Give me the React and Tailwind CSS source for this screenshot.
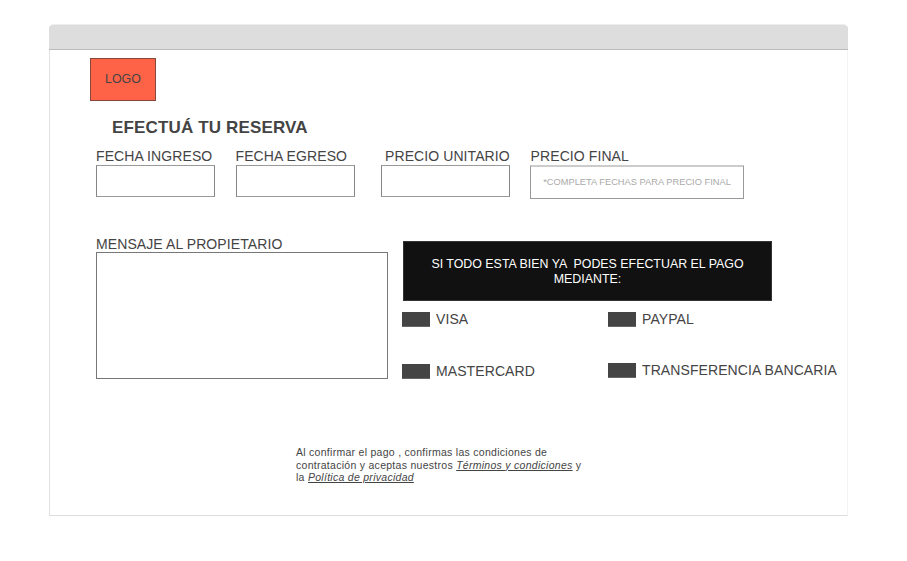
function Field({ label, className, labelClass = "", boxClass, children }) {
  return (
    <label className={`flex flex-col ${className}`}>
      <span className={`whitespace-nowrap text-[14px] leading-4 tracking-[0.09px] ${labelClass}`}>{label}</span>
      <span className={`mt-[1px] flex items-center justify-center border ${boxClass}`}>{children}</span>
    </label>
  );
}

function PaymentOption({ label, className = "" }) {
  return (
    <div className={`flex items-center gap-[6px] self-start ${className}`}>
      <span className="h-[15px] w-[28px] shrink-0 border-b border-[#666] bg-[#444]" />
      <span className="whitespace-nowrap text-[14px] leading-[15px] tracking-[0.09px]">{label}</span>
    </div>
  );
}

export default function App() {
  return (
    <div className="h-[561px] w-[907px] bg-white pt-[24px] pl-[49px] font-['Liberation_Sans',Arial,sans-serif] text-[#444]">
      <div className="flex h-[492px] w-[799px] flex-col rounded-t-[5px] border border-t-[#eee] border-r-[#f3f3f3] border-b-[#ddd] border-l-[#e2e2e2]">
        <div className="-mx-px h-[25px] shrink-0 rounded-t-[4px] border-b border-[#bbb] bg-[#ddd]" />
        <header className="pt-[8px] pl-[40px]">
          <div className="flex h-[43px] w-[66px] items-center justify-center border border-[#85463b] bg-[#ff6347] text-[12.4px]">
            LOGO
          </div>
          <h1 className="mt-[17px] ml-[22px] text-[17px] leading-[19px] font-bold tracking-[0.15px]">EFECTUÁ TU RESERVA</h1>
        </header>

        <section className="mt-[11px] flex h-[51px] items-start pl-[46px]">
          <Field label="FECHA INGRESO" className="w-[119px]" boxClass="h-[32px] border-[#858585] border-y-[#999]" />
          <Field label="FECHA EGRESO" className="ml-[21px] w-[119px]" labelClass="-ml-[0.5px]" boxClass="h-[32px] border-[#858585] border-y-[#999]" />
          <Field label="PRECIO UNITARIO" className="ml-[26px] w-[129px]" labelClass="ml-[4px]" boxClass="h-[32px] border-[#858585] border-y-[#999]" />
          <Field label="PRECIO FINAL" className="ml-[20px] w-[214px]" labelClass="ml-[0.6px]" boxClass="h-[34px] border-t-2 border-[#999] border-t-[#ccc]">
            <span className="text-[9.3px] whitespace-nowrap text-[#aaa]">*COMPLETA FECHAS PARA PRECIO FINAL</span>
          </Field>
        </section>

        <section className="mt-[37px] flex items-start pl-[46px]">
          <Field label="MENSAJE AL PROPIETARIO" className="w-[292px]" labelClass="-mb-px" boxClass="h-[127px] border-[#777]" />
          <div className="mt-[5px] ml-[14px] w-[440px]">
            <div className="ml-px flex h-[60px] w-[369px] items-center justify-center border border-[#333] bg-[#111] pt-[2px] text-center text-[12.4px] leading-[15px] text-white">
              <p>
                <span className="whitespace-pre">SI TODO ESTA BIEN YA  PODES EFECTUAR EL PAGO</span>
                <br />
                MEDIANTE:
              </p>
            </div>
            <div className="mt-[11px] grid grid-cols-[206px_1fr] gap-y-[37px]">
              <PaymentOption label="VISA" />
              <PaymentOption label="PAYPAL" />
              <PaymentOption label="MASTERCARD" />
              <PaymentOption label="TRANSFERENCIA BANCARIA" className="-mt-px" />
            </div>
          </div>
        </section>

        <p className="mt-[67px] ml-[246px] text-[10.5px] leading-[12.5px] tracking-[0.28px] whitespace-nowrap">
          Al confirmar el pago , confirmas las condiciones de
          <br />
          contratación y aceptas nuestros <a className="italic underline">Términos y condiciones</a> y
          <br />
          la <a className="italic underline">Política de privacidad</a>
        </p>
      </div>
    </div>
  );
}
